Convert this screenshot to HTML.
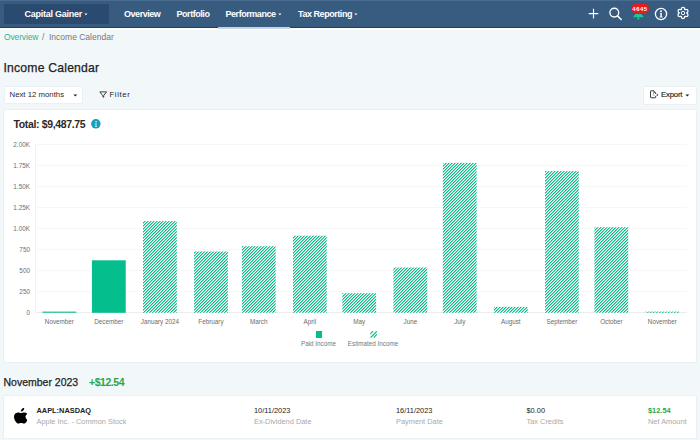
<!DOCTYPE html>
<html><head><meta charset="utf-8">
<style>
*{margin:0;padding:0;box-sizing:border-box}
html,body{width:700px;height:440px;overflow:hidden;background:#f2f7fa;font-family:"Liberation Sans",sans-serif;position:relative}
.a{position:absolute;white-space:nowrap}
#nav{position:absolute;left:0;top:0;width:700px;height:28.3px;background:#385b80;border-bottom:1.8px solid #1d3d64}
#ddn{position:absolute;left:4px;top:4.4px;width:105px;height:19.2px;background:#2b4a6f;border-radius:1px}
.nt{color:#fff;font-weight:bold;font-size:9px;line-height:9px;letter-spacing:-0.45px}
.car{position:absolute;width:0;height:0;border-left:1.5px solid transparent;border-right:1.5px solid transparent;border-top:1.6px solid #fff}
#uline{position:absolute;left:218px;top:27px;width:72px;height:1.6px;background:#c9d3de}
.card{position:absolute;background:#fff;box-shadow:0 0 0 0.6px rgba(40,80,110,0.06)}
.gl{position:absolute;left:35px;width:652px;height:1.4px;background:#f7f7f7}
.yl{position:absolute;right:670px;font-size:6.4px;line-height:7px;color:#6e6e6e;text-align:right}
.xl{position:absolute;font-size:6.3px;line-height:7px;color:#6c6c6c;text-align:center;width:50px}
.bar{position:absolute;width:34px;background:repeating-linear-gradient(135deg,#1bbf8e 0 1.3px,#fff 1.3px 2.2px)}
.lbl{font-size:7.4px;line-height:8px;color:#222}
.sub{font-size:7.4px;line-height:8px;color:#a9a9a9}
</style></head><body>
<div class="a" style="left:0;top:28.3px;width:700px;height:2px;background:#fff"></div>
<div id="nav">
  <div class="a" style="left:0;top:0;width:700px;height:1px;background:#4a6b90"></div>
  <div id="ddn"></div>
  <div class="a nt" style="left:24.5px;top:10.2px;letter-spacing:-0.25px">Capital Gainer</div>
  <svg class="a" style="left:83.5px;top:12.5px" width="4" height="3" viewBox="0 0 4 3"><path d="M0.3 0.6H3.5L1.9 2.3Z" fill="#fff"/></svg>
  <div class="a nt" style="left:124px;top:10.2px">Overview</div>
  <div class="a nt" style="left:176.5px;top:10.2px">Portfolio</div>
  <div class="a nt" style="left:225.5px;top:10.2px">Performance</div>
  <svg class="a" style="left:278px;top:12.5px" width="4" height="3" viewBox="0 0 4 3"><path d="M0.3 0.6H3.5L1.9 2.3Z" fill="#fff"/></svg>
  <div class="a nt" style="left:298px;top:10.2px">Tax Reporting</div>
  <svg class="a" style="left:354px;top:12.5px" width="4" height="3" viewBox="0 0 4 3"><path d="M0.3 0.6H3.5L1.9 2.3Z" fill="#fff"/></svg>
  <div id="uline"></div>
  <!-- plus -->
  <svg class="a" style="left:586px;top:6px" width="16" height="16" viewBox="0 0 16 16"><path d="M7.5 2.8V12.4M2.7 7.6H12.3" stroke="#fff" stroke-width="1.15"/></svg>
  <!-- search -->
  <svg class="a" style="left:606px;top:4px" width="18" height="18" viewBox="0 0 18 18"><circle cx="8.3" cy="8.6" r="4.4" stroke="#fff" stroke-width="1.35" fill="none"/><path d="M11.5 11.9L15.2 15.5" stroke="#fff" stroke-width="1.5" stroke-linecap="round"/></svg>
  <!-- bell -->
  <svg class="a" style="left:630px;top:10px" width="16" height="12" viewBox="0 0 16 12"><path d="M5.3 4H11.3L13.8 7.2H3Z" fill="#1fc595"/><circle cx="8.3" cy="8.5" r="1.15" fill="#1fc595"/></svg>
  <div class="a" style="left:630.5px;top:3.5px;width:18.5px;height:9.6px;background:#ec1a1d;border-radius:5px;color:#fff;font-weight:bold;font-size:5.9px;line-height:10.2px;text-align:center;letter-spacing:0.55px;padding-left:0.5px">4645</div>
  <!-- info -->
  <svg class="a" style="left:654px;top:7px" width="14" height="14" viewBox="0 0 14 14"><circle cx="7" cy="7" r="5.6" stroke="#fff" stroke-width="1.3" fill="none"/><circle cx="7" cy="4.2" r="1" fill="#fff"/><path d="M5.9 5.9H7.8V9.4H8.5V10.4H5.6V9.4H6.4V6.8H5.9Z" fill="#fff"/></svg>
  <!-- gear -->
  <svg class="a" style="left:676px;top:6.1px" width="14" height="14" viewBox="0 0 14 14"><circle cx="7" cy="7" r="4.45" fill="#fff"/><circle cx="7.00" cy="3.20" r="2.35" fill="#fff"/><circle cx="3.71" cy="5.10" r="2.35" fill="#fff"/><circle cx="3.71" cy="8.90" r="2.35" fill="#fff"/><circle cx="7.00" cy="10.80" r="2.35" fill="#fff"/><circle cx="10.29" cy="8.90" r="2.35" fill="#fff"/><circle cx="10.29" cy="5.10" r="2.35" fill="#fff"/><circle cx="7" cy="7" r="3.3" fill="#385b80"/><circle cx="7.00" cy="3.20" r="1.15" fill="#385b80"/><circle cx="3.71" cy="5.10" r="1.15" fill="#385b80"/><circle cx="3.71" cy="8.90" r="1.15" fill="#385b80"/><circle cx="7.00" cy="10.80" r="1.15" fill="#385b80"/><circle cx="10.29" cy="8.90" r="1.15" fill="#385b80"/><circle cx="10.29" cy="5.10" r="1.15" fill="#385b80"/><circle cx="7" cy="7" r="1.7" fill="none" stroke="#fff" stroke-width="0.95"/></svg>
</div>

<!-- breadcrumb -->
<div class="a" style="left:4px;top:33px;font-size:8.5px;line-height:8.5px;color:#2bb58a;letter-spacing:-0.15px">Overview</div>
<div class="a" style="left:42px;top:33px;font-size:8.5px;line-height:8.5px;color:#777">/</div>
<div class="a" style="left:49px;top:33px;font-size:8.5px;line-height:8.5px;color:#777">Income Calendar</div>

<!-- title -->
<div class="a" style="left:3.5px;top:61.9px;font-size:12.2px;line-height:12px;color:#222;letter-spacing:0.2px;-webkit-text-stroke:0.25px #222">Income Calendar</div>

<!-- filters -->
<div class="card" style="left:4.5px;top:87px;width:77.5px;height:16px"></div>
<div class="a" style="left:9.5px;top:91px;font-size:7.8px;line-height:8px;color:#2a2a2a">Next 12 months</div>
<svg class="a" style="left:72.5px;top:93.5px" width="5" height="3" viewBox="0 0 5 3"><path d="M0.4 0.6H4.2L2.3 2.6Z" fill="#222"/></svg>
<svg class="a" style="left:98.6px;top:90.6px" width="9" height="8" viewBox="0 0 9 8"><path d="M0.8 0.9H7.6L4.7 4.5V6.3L3.7 5.6V4.5Z" fill="none" stroke="#333" stroke-width="0.95" stroke-linejoin="round"/></svg>
<div class="a" style="left:109.5px;top:91px;font-size:7.8px;line-height:8px;color:#2a2a2a;letter-spacing:0.6px">Filter</div>

<div class="card" style="left:643.5px;top:87px;width:52px;height:16.5px"></div>
<svg class="a" style="left:649px;top:89px" width="10" height="10" viewBox="0 0 10 10"><path d="M4.6 1.8H2Q1.5 1.8 1.5 2.3V8.3Q1.5 8.8 2 8.8H6.2Q6.7 8.8 6.7 8.3V7.3M4.6 1.8L6.7 3.9V4.6" fill="none" stroke="#333" stroke-width="0.95" stroke-linecap="round"/><path d="M4.2 4.2L5.6 3.4" stroke="#111" stroke-width="1"/><path d="M3.6 6.1H5.5" stroke="#777" stroke-width="0.7"/><circle cx="8.3" cy="5.95" r="0.8" fill="#111"/></svg>
<div class="a" style="left:661px;top:91px;font-size:7.8px;line-height:8px;color:#222;letter-spacing:-0.2px;-webkit-text-stroke:0.15px #222">Export</div>
<svg class="a" style="left:684.8px;top:93.6px" width="5" height="3" viewBox="0 0 5 3"><path d="M0.4 0.6H4.2L2.3 2.6Z" fill="#222"/></svg>

<!-- chart card -->
<div class="card" style="left:3.5px;top:109.5px;width:692px;height:252px"></div>
<div class="a" style="left:13.5px;top:119.4px;font-size:10.5px;line-height:11px;color:#2a2a2a;font-weight:bold;letter-spacing:-0.35px">Total: $9,487.75</div>
<svg class="a" style="left:90.5px;top:119.3px" width="10" height="10" viewBox="0 0 10 10"><circle cx="4.85" cy="4.8" r="4.75" fill="#16a0b9"/><circle cx="5.1" cy="2.7" r="0.7" fill="#fff"/><path d="M4.4 4H5.4V7.4H5.9V7.9H4.2V7.4H4.6V4.5H4.4Z" fill="#fff"/></svg>

<div class="gl" style="top:144px"></div>
<div class="gl" style="top:165px"></div>
<div class="gl" style="top:186px"></div>
<div class="gl" style="top:207px"></div>
<div class="gl" style="top:228px"></div>
<div class="gl" style="top:249px"></div>
<div class="gl" style="top:270px"></div>
<div class="gl" style="top:291px"></div>
<div class="gl" style="top:312px;background:#ececec"></div>
<div class="a" style="left:34.5px;top:144px;width:1px;height:169px;background:#f3f3f3"></div>

<div class="yl" style="top:141px">2.00K</div>
<div class="yl" style="top:162px">1.75K</div>
<div class="yl" style="top:183px">1.50K</div>
<div class="yl" style="top:204px">1.25K</div>
<div class="yl" style="top:225px">1.00K</div>
<div class="yl" style="top:246px">750</div>
<div class="yl" style="top:267px">500</div>
<div class="yl" style="top:288px">250</div>
<div class="yl" style="top:309px">0</div>

<!-- bars -->
<svg class="a" style="left:0;top:0" width="700" height="440"><defs><pattern id="hp" patternUnits="userSpaceOnUse" width="3" height="3" shape-rendering="crispEdges"><rect x="0" y="0" width="1" height="1" fill="#0cbc8a" fill-opacity="0.5"/><rect x="2" y="0" width="1" height="1" fill="#0cbc8a"/><rect x="1" y="1" width="1" height="1" fill="#0cbc8a"/><rect x="2" y="1" width="1" height="1" fill="#0cbc8a" fill-opacity="0.5"/><rect x="0" y="2" width="1" height="1" fill="#0cbc8a"/><rect x="1" y="2" width="1" height="1" fill="#0cbc8a" fill-opacity="0.5"/></pattern></defs>
<rect x="42.50" y="311.6" width="33.8" height="1.2" fill="#1bbf8e"/>
<rect x="91.93" y="260.3" width="33.8" height="52.5" fill="#05be8d"/>
<rect x="143.00" y="221.1" width="33.8" height="91.7" fill="#fff"/><rect x="143.00" y="221.1" width="33.8" height="91.7" fill="url(#hp)"/>
<rect x="194.07" y="251.5" width="33.8" height="61.3" fill="#fff"/><rect x="194.07" y="251.5" width="33.8" height="61.3" fill="url(#hp)"/>
<rect x="241.85" y="246.2" width="33.8" height="66.6" fill="#fff"/><rect x="241.85" y="246.2" width="33.8" height="66.6" fill="url(#hp)"/>
<rect x="292.93" y="235.7" width="33.8" height="77.1" fill="#fff"/><rect x="292.93" y="235.7" width="33.8" height="77.1" fill="url(#hp)"/>
<rect x="342.35" y="293.2" width="33.8" height="19.6" fill="#fff"/><rect x="342.35" y="293.2" width="33.8" height="19.6" fill="url(#hp)"/>
<rect x="393.43" y="267.5" width="33.8" height="45.3" fill="#fff"/><rect x="393.43" y="267.5" width="33.8" height="45.3" fill="url(#hp)"/>
<rect x="442.85" y="162.9" width="33.8" height="149.9" fill="#fff"/><rect x="442.85" y="162.9" width="33.8" height="149.9" fill="url(#hp)"/>
<rect x="493.93" y="306.9" width="33.8" height="5.9" fill="#fff"/><rect x="493.93" y="306.9" width="33.8" height="5.9" fill="url(#hp)"/>
<rect x="545.00" y="171.1" width="33.8" height="141.7" fill="#fff"/><rect x="545.00" y="171.1" width="33.8" height="141.7" fill="url(#hp)"/>
<rect x="594.43" y="227.2" width="33.8" height="85.6" fill="#fff"/><rect x="594.43" y="227.2" width="33.8" height="85.6" fill="url(#hp)"/>
<rect x="645.50" y="311.6" width="33.8" height="1.2" fill="url(#hp)"/>
</svg>
<div class="xl" style="left:34.40px;top:318.2px">November</div>
<div class="xl" style="left:83.83px;top:318.2px">December</div>
<div class="xl" style="left:134.90px;top:318.2px">January 2024</div>
<div class="xl" style="left:185.97px;top:318.2px">February</div>
<div class="xl" style="left:233.75px;top:318.2px">March</div>
<div class="xl" style="left:284.83px;top:318.2px">April</div>
<div class="xl" style="left:334.25px;top:318.2px">May</div>
<div class="xl" style="left:385.33px;top:318.2px">June</div>
<div class="xl" style="left:434.75px;top:318.2px">July</div>
<div class="xl" style="left:485.83px;top:318.2px">August</div>
<div class="xl" style="left:536.90px;top:318.2px">September</div>
<div class="xl" style="left:586.33px;top:318.2px">October</div>
<div class="xl" style="left:637.40px;top:318.2px">November</div>

<!-- legend -->
<div class="a" style="left:315.7px;top:331px;width:6.5px;height:6.5px;background:#05be8d"></div>
<div class="a" style="left:301px;top:339.5px;font-size:6.3px;line-height:7px;color:#777">Paid Income</div>
<svg class="a" style="left:369.8px;top:331.1px" width="7.2" height="6.5" viewBox="0 0 7.2 6.5"><path d="M0 3.2L3.2 0M0.6 6.5L6.8 0.3M3.8 6.5L7.2 3.1" stroke="#14bd8b" stroke-width="1.15"/></svg>
<div class="a" style="left:347.8px;top:339.5px;font-size:6.3px;line-height:7px;color:#777">Estimated Income</div>

<!-- month header -->
<div class="a" style="left:3.5px;top:376.5px;font-size:10.5px;line-height:11px;color:#222;letter-spacing:0px;-webkit-text-stroke:0.25px #222">November 2023</div>
<div class="a" style="left:89px;top:376.5px;font-size:10.5px;line-height:11px;color:#27a745;font-weight:bold;letter-spacing:-0.45px">+$12.54</div>

<!-- row -->
<div class="card" style="left:3.5px;top:396px;width:692px;height:41.5px"></div>
<svg class="a" style="left:13.6px;top:408.4px" width="13.8" height="15.6" viewBox="-1.8 0.1 156.7 196.5" preserveAspectRatio="none"><path fill="#000" d="M150.4 155.8c-2.8 6.4-6.1 12.3-9.9 17.8-5.2 7.5-9.5 12.6-12.8 15.5-5.1 4.7-10.6 7.1-16.5 7.3-4.2 0-9.3-1.2-15.2-3.6-6-2.4-11.4-3.6-16.4-3.6-5.2 0-10.8 1.2-16.8 3.6-6 2.4-10.8 3.7-14.5 3.8-5.6.2-11.2-2.3-16.8-7.5-3.6-3.1-8-8.5-13.3-16.1-5.7-8-10.4-17.3-14.1-27.9-4-11.4-5.9-22.5-5.9-33.2 0-12.3 2.7-22.9 8-31.7 4.2-7.1 9.8-12.8 16.8-16.9 7-4.2 14.6-6.3 22.7-6.4 4.4 0 10.3 1.4 17.5 4.1 7.3 2.7 11.9 4.1 14 4.1 1.5 0 6.8-1.6 15.7-4.9 8.4-3 15.5-4.3 21.3-3.8 15.8 1.3 27.6 7.5 35.5 18.7-14.1 8.6-21.1 20.6-21 36 .1 12 4.5 22 13.1 29.9 3.9 3.7 8.3 6.6 13.1 8.6-1 3.1-2.2 6-3.3 8.9zM114.3 4c0 9.4-3.4 18.1-10.2 26.2-8.2 9.6-18.1 15.1-28.8 14.3-.1-1.1-.2-2.3-.2-3.6 0-9 3.9-18.6 10.9-26.5 3.5-4 7.9-7.3 13.3-10 5.4-2.6 10.4-4.1 15.2-4.3.1 1.3.2 2.6.2 3.9z"/></svg>
<div class="a lbl" style="left:36.5px;top:406.5px;font-weight:bold">AAPL:NASDAQ</div>
<div class="a sub" style="left:36.5px;top:417.5px">Apple Inc. - Common Stock</div>
<div class="a lbl" style="left:254px;top:406.5px">10/11/2023</div>
<div class="a sub" style="left:254px;top:417.5px">Ex-Dividend Date</div>
<div class="a lbl" style="left:396px;top:406.5px">16/11/2023</div>
<div class="a sub" style="left:396px;top:417.5px">Payment Date</div>
<div class="a lbl" style="left:526.5px;top:406.5px">$0.00</div>
<div class="a sub" style="left:526.5px;top:417.5px">Tax Credits</div>
<div class="a lbl" style="left:648px;top:406.5px;font-weight:bold;color:#25a844">$12.54</div>
<div class="a sub" style="left:648px;top:417.5px">Net Amount</div>
</body></html>
